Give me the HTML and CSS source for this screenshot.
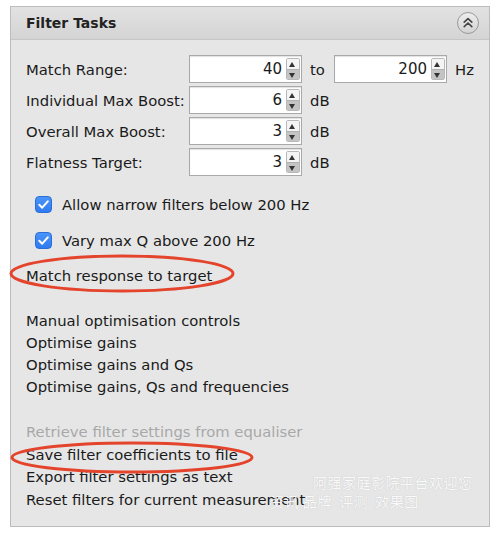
FILE: index.html
```html
<!DOCTYPE html>
<html>
<head>
<meta charset="utf-8">
<link rel="stylesheet" href="styles.css">
</head>
<body>
<div class="panel">
  <div class="header">
    <span class="title">Filter Tasks</span>
    <svg class="collapse" width="24" height="24" viewBox="0 0 24 24">
      <defs>
        <linearGradient id="cg" x1="0" y1="0" x2="0" y2="1">
          <stop offset="0" stop-color="#eeeeee"/>
          <stop offset="1" stop-color="#d2d2d2"/>
        </linearGradient>
      </defs>
      <circle cx="12" cy="12" r="10.5" fill="url(#cg)" stroke="#9a9a9a" stroke-width="1"/>
      <path d="M8.2 11.2 L12 7.6 L15.8 11.2" fill="none" stroke="#444" stroke-width="1.6" stroke-linecap="round" stroke-linejoin="round"/>
      <path d="M8.2 15.6 L12 12 L15.8 15.6" fill="none" stroke="#444" stroke-width="1.6" stroke-linecap="round" stroke-linejoin="round"/>
    </svg>
  </div>
  <div class="body">
    <div class="fields">
      <div class="row">
        <span class="label">Match Range:</span>
        <div class="spin"><span class="val">40</span><span class="arrows"><span class="up"></span><span class="down"></span></span></div>
        <span class="unit">to</span>
        <div class="spin"><span class="val">200</span><span class="arrows"><span class="up"></span><span class="down"></span></span></div>
        <span class="unit">Hz</span>
      </div>
      <div class="row">
        <span class="label">Individual Max Boost:</span>
        <div class="spin"><span class="val">6</span><span class="arrows"><span class="up"></span><span class="down"></span></span></div>
        <span class="unit">dB</span>
      </div>
      <div class="row">
        <span class="label">Overall Max Boost:</span>
        <div class="spin"><span class="val">3</span><span class="arrows"><span class="up"></span><span class="down"></span></span></div>
        <span class="unit">dB</span>
      </div>
      <div class="row">
        <span class="label">Flatness Target:</span>
        <div class="spin"><span class="val">3</span><span class="arrows"><span class="up"></span><span class="down"></span></span></div>
        <span class="unit">dB</span>
      </div>
    </div>

    <div class="checks">
      <div class="check">
        <span class="box"><svg width="17" height="17" viewBox="0 0 17 17"><path d="M4.3 8.8 L7.2 11.7 L12.8 5.3" fill="none" stroke="#fff" stroke-width="2" stroke-linecap="round" stroke-linejoin="round"/></svg></span>
        <span>Allow narrow filters below 200 Hz</span>
      </div>
      <div class="check">
        <span class="box"><svg width="17" height="17" viewBox="0 0 17 17"><path d="M4.3 8.8 L7.2 11.7 L12.8 5.3" fill="none" stroke="#fff" stroke-width="2" stroke-linecap="round" stroke-linejoin="round"/></svg></span>
        <span>Vary max Q above 200 Hz</span>
      </div>
    </div>

    <div class="link match">Match response to target</div>

    <div class="group first">
      <div class="link">Manual optimisation controls</div>
      <div class="link">Optimise gains</div>
      <div class="link">Optimise gains and Qs</div>
      <div class="link">Optimise gains, Qs and frequencies</div>
    </div>

    <div class="group second">
      <div class="link disabled">Retrieve filter settings from equaliser</div>
      <div class="link">Save filter coefficients to file</div>
      <div class="link">Export filter settings as text</div>
      <div class="link">Reset filters for current measurement</div>
    </div>
  </div>
</div>

<svg class="marks" width="500" height="535" viewBox="0 0 500 535">
  <ellipse cx="122" cy="273.5" rx="111" ry="17.5" fill="none" stroke="#e4442c" stroke-width="3"/>
  <ellipse cx="132" cy="457.5" rx="120" ry="14.5" fill="none" stroke="#e4442c" stroke-width="3"/>
</svg>

<div class="watermark">
  <div class="wm1">阿强家庭影院平台欢迎您</div>
  <div class="wm2">资讯&nbsp;品牌&nbsp;&nbsp;评测&nbsp;&nbsp;效果图</div>
</div>
</body>
</html>
```

FILE: styles.css
```css
html, body {
  margin: 0;
  padding: 0;
  background: #ffffff;
}
body {
  width: 500px;
  height: 535px;
  position: relative;
  overflow: hidden;
  font-family: "DejaVu Sans", "Noto Sans", sans-serif;
  font-size: 14.8px;
  color: #1a1a1a;
}
.panel {
  margin: 6px 0 0 10px;
  width: 478px;
  height: 519px;
  border: 1px solid #bcbcbc;
  background: #e6e6e6;
  box-sizing: content-box;
}
.header {
  height: 33px;
  box-sizing: border-box;
  border-bottom: 1px solid #c6c6c6;
  background: linear-gradient(#e2e2e2, #d4d4d4);
  display: flex;
  align-items: center;
  justify-content: space-between;
  padding: 0 9px 0 15px;
}
.title {
  font-weight: bold;
  font-size: 14px;
  color: #222;
}
.collapse {
  display: block;
}
.body {
  padding: 15px 15px 0 15px;
}
.fields {
  display: flex;
  flex-direction: column;
  gap: 3px;
}
.row {
  display: flex;
  align-items: center;
  height: 28px;
}
.label {
  width: 163px;
  flex: none;
}
.spin {
  width: 113px;
  height: 28px;
  box-sizing: border-box;
  border: 1px solid #a9a9a9;
  background: #fff;
  box-shadow: inset 0 1px 1px rgba(0,0,0,0.12);
  display: flex;
  align-items: stretch;
  flex: none;
}
.val {
  flex: 1;
  text-align: right;
  padding-right: 4px;
  line-height: 26px;
  font-size: 15px;
}
.arrows {
  width: 12px;
  margin: 2px 1px 2px 0;
  display: flex;
  flex-direction: column;
  border: 1px solid #b8b8b8;
  border-radius: 2px;
  overflow: hidden;
}
.up, .down {
  flex: 1;
  position: relative;
}
.up {
  background: #f4f4f4;
}
.down {
  background: #c4c4c4;
  border-top: 1px solid #b0b0b0;
}
.up::after, .down::after {
  content: "";
  position: absolute;
  left: 2px;
  top: 3px;
  border-left: 3.5px solid transparent;
  border-right: 3.5px solid transparent;
}
.up::after {
  border-bottom: 5px solid #333;
}
.down::after {
  top: 3px;
  border-top: 5px solid #333;
}
.unit {
  margin-left: 8px;
  width: 16px;
  flex: none;
}
.row .spin + .unit + .spin {
  margin-left: 8px;
}
.checks {
  margin-top: 18px;
  padding-left: 9px;
  display: flex;
  flex-direction: column;
  gap: 16px;
}
.check {
  display: flex;
  align-items: center;
  gap: 10px;
  height: 20px;
}
.box {
  width: 17px;
  height: 17px;
  border-radius: 4px;
  background: linear-gradient(#4a95fa, #2f7af0);
  border: 1px solid #2a6fd8;
  box-sizing: border-box;
  display: flex;
  align-items: center;
  justify-content: center;
}
.box svg {
  display: block;
  margin: -1px;
}
.link {
  line-height: 22px;
  height: 22px;
  white-space: nowrap;
}
.match {
  margin-top: 15px;
}
.group.first {
  margin-top: 23px;
}
.group.second {
  margin-top: 23px;
}
.group.second .link {
  line-height: 22.5px;
  height: 22.5px;
}
.disabled {
  color: #a8a8a8;
}
.marks {
  position: absolute;
  left: 0;
  top: 0;
  pointer-events: none;
}
.watermark {
  position: absolute;
  left: 270px;
  top: 473px;
  font-family: "Noto Sans CJK SC", sans-serif;
  font-size: 14px;
  line-height: 19px;
  color: rgba(255,255,255,0.92);
  text-shadow: 0 0 1px rgba(150,150,150,0.5);
  letter-spacing: 0.5px;
}
.wm1 {
  margin-left: 43px;
}
```
